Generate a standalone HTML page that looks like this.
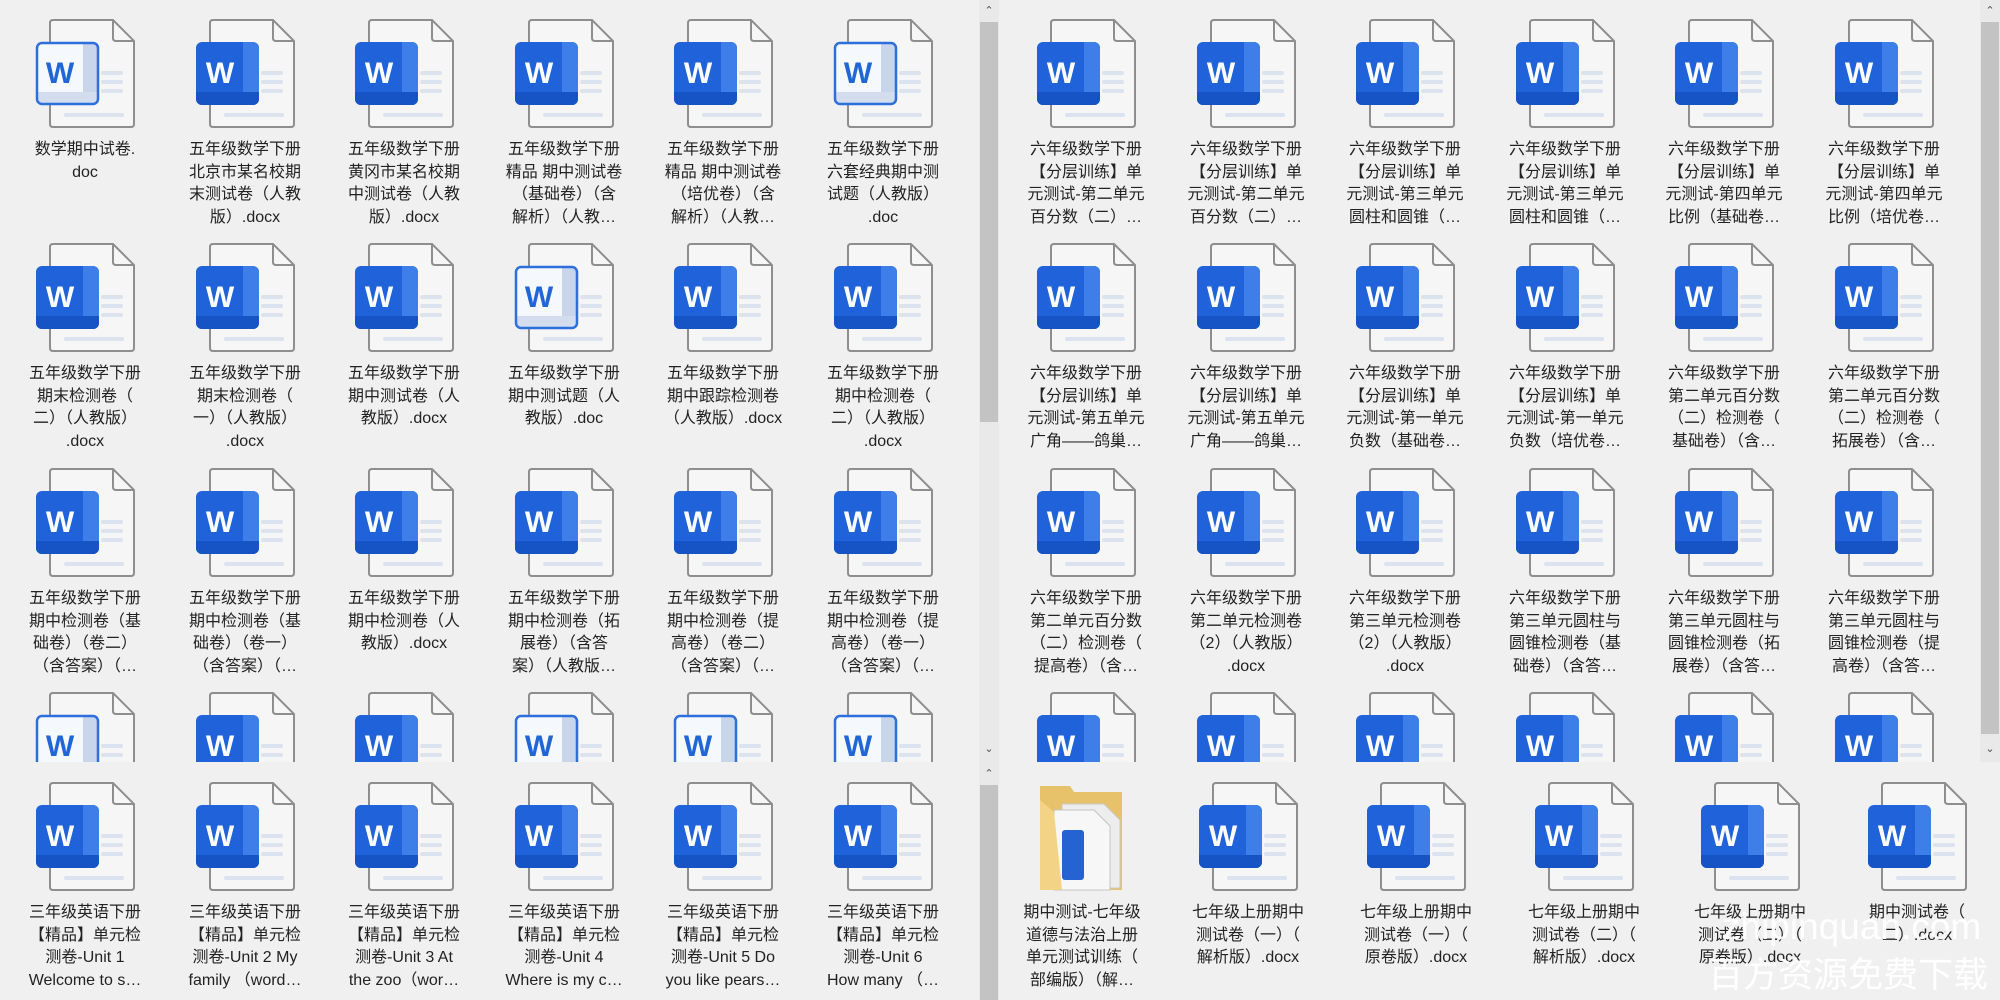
<!DOCTYPE html>
<html><head><meta charset="utf-8">
<style>
html{margin:0;padding:0;width:2000px;height:1000px;overflow:hidden;}
body{margin:0;padding:0;width:2000px;height:1000px;background:#f0f0f0;position:relative;overflow:hidden;font-family:"Liberation Sans","Noto Sans CJK SC",sans-serif;}
.pane{position:absolute;overflow:hidden;}
.c{position:absolute;width:200px;}
.c svg{display:block;margin-left:50px;width:100px;height:110px;}
.c p{margin:10px 0 0 0;text-align:center;font-size:16px;line-height:22.6px;color:#222;white-space:nowrap;}
.sb{position:absolute;background:#e9e9e9;width:20px;}
.th{position:absolute;left:1px;width:18px;background:#c3c3c3;}
.ar{position:absolute;left:0;width:20px;text-align:center;font-size:11px;color:#555;line-height:14px;}
.wm1{position:absolute;left:1722px;top:906px;font-size:37px;line-height:42px;color:rgba(255,255,255,0.95);font-family:"Liberation Sans",sans-serif;white-space:nowrap;}
.wm2{position:absolute;left:1708px;top:950px;font-size:35px;line-height:46px;color:rgba(255,255,255,0.97);font-family:"Noto Sans CJK SC",sans-serif;white-space:nowrap;}
</style></head><body>
<svg width="0" height="0" style="position:absolute">
<defs>
<clipPath id="tc"><rect x="1" y="23" width="63" height="63" rx="6"/></clipPath>
<g id="pg">
<path d="M18,1 H78 L99,22 V105 Q99,108 96,108 H18 Q15,108 15,105 V4 Q15,1 18,1 Z" fill="#f6f6f6" stroke="#8e8e8e" stroke-width="2"/>
<path d="M78,1 V19 Q78,22 81,22 H99" fill="none" stroke="#8e8e8e" stroke-width="2"/>
<rect x="66" y="52" width="22" height="4" rx="2" fill="#dbe3ef"/>
<rect x="66" y="61" width="22" height="4" rx="2" fill="#dbe3ef"/>
<rect x="66" y="70" width="22" height="4" rx="2" fill="#dbe3ef"/>
<rect x="29" y="94" width="60" height="4" rx="2" fill="#dbe3ef"/>
</g>
<symbol id="d" viewBox="0 0 100 110">
<use href="#pg"/>
<g clip-path="url(#tc)">
<rect x="0" y="22" width="66" height="66" fill="#1f62da"/>
<rect x="48" y="22" width="18" height="66" fill="#3d7ee8"/>
<rect x="0" y="73" width="66" height="15" fill="#1653c4"/>
</g>
<text x="25" y="64" text-anchor="middle" font-family="Liberation Sans,sans-serif" font-weight="bold" font-size="30" fill="#fff">W</text>
</symbol>
<symbol id="l" viewBox="0 0 100 110">
<use href="#pg"/>
<g clip-path="url(#tc)">
<rect x="0" y="22" width="66" height="66" fill="#f5f8fd"/>
<rect x="48" y="22" width="18" height="66" fill="#c8d5ea"/>
<rect x="0" y="73" width="66" height="15" fill="#d3ddee"/>
</g>
<rect x="2" y="24" width="61" height="61" rx="5" fill="none" stroke="#2d6fdc" stroke-width="2.5"/>
<text x="25" y="64" text-anchor="middle" font-family="Liberation Sans,sans-serif" font-weight="bold" font-size="30" fill="#2166d6">W</text>
</symbol>
<symbol id="f" viewBox="0 0 100 110">
<path d="M8,4 L38,4 L42,10 L90,10 L90,108 L8,108 Z" fill="#e8c26a"/>
<path d="M30,22 L72,22 L88,38 L88,106 L30,106 Z" fill="#ededed" stroke="#c9c9c9"/>
<path d="M22,28 L62,28 L78,44 L78,108 L22,108 Z" fill="#f7f7f7" stroke="#c4c4c4"/>
<rect x="30" y="48" width="22" height="50" rx="3" fill="#2563d3"/>
<path d="M8,18 L22,30 L30,108 L8,108 Z" fill="#f3d486"/>
</symbol>
</defs></svg>

<!-- LEFT TOP -->
<div class="pane" style="left:0;top:0;width:979px;height:762px;">
<div class="c" style="left:-15px;top:19px"><svg><use href="#l"/></svg><p>数学期中试卷.<br>doc</p></div>
<div class="c" style="left:145px;top:19px"><svg><use href="#d"/></svg><p>五年级数学下册<br>北京市某名校期<br>末测试卷（人教<br>版）.docx</p></div>
<div class="c" style="left:304px;top:19px"><svg><use href="#d"/></svg><p>五年级数学下册<br>黄冈市某名校期<br>中测试卷（人教<br>版）.docx</p></div>
<div class="c" style="left:464px;top:19px"><svg><use href="#d"/></svg><p>五年级数学下册<br>精品 期中测试卷<br>（基础卷）（含<br>解析）（人教…</p></div>
<div class="c" style="left:623px;top:19px"><svg><use href="#d"/></svg><p>五年级数学下册<br>精品 期中测试卷<br>（培优卷）（含<br>解析）（人教…</p></div>
<div class="c" style="left:783px;top:19px"><svg><use href="#l"/></svg><p>五年级数学下册<br>六套经典期中测<br>试题（人教版）<br>.doc</p></div>

<div class="c" style="left:-15px;top:243px"><svg><use href="#d"/></svg><p>五年级数学下册<br>期末检测卷（<br>二）（人教版）<br>.docx</p></div>
<div class="c" style="left:145px;top:243px"><svg><use href="#d"/></svg><p>五年级数学下册<br>期末检测卷（<br>一）（人教版）<br>.docx</p></div>
<div class="c" style="left:304px;top:243px"><svg><use href="#d"/></svg><p>五年级数学下册<br>期中测试卷（人<br>教版）.docx</p></div>
<div class="c" style="left:464px;top:243px"><svg><use href="#l"/></svg><p>五年级数学下册<br>期中测试题（人<br>教版）.doc</p></div>
<div class="c" style="left:623px;top:243px"><svg><use href="#d"/></svg><p>五年级数学下册<br>期中跟踪检测卷<br>（人教版）.docx</p></div>
<div class="c" style="left:783px;top:243px"><svg><use href="#d"/></svg><p>五年级数学下册<br>期中检测卷（<br>二）（人教版）<br>.docx</p></div>

<div class="c" style="left:-15px;top:468px"><svg><use href="#d"/></svg><p>五年级数学下册<br>期中检测卷（基<br>础卷）（卷二）<br>（含答案）（…</p></div>
<div class="c" style="left:145px;top:468px"><svg><use href="#d"/></svg><p>五年级数学下册<br>期中检测卷（基<br>础卷）（卷一）<br>（含答案）（…</p></div>
<div class="c" style="left:304px;top:468px"><svg><use href="#d"/></svg><p>五年级数学下册<br>期中检测卷（人<br>教版）.docx</p></div>
<div class="c" style="left:464px;top:468px"><svg><use href="#d"/></svg><p>五年级数学下册<br>期中检测卷（拓<br>展卷）（含答<br>案）（人教版…</p></div>
<div class="c" style="left:623px;top:468px"><svg><use href="#d"/></svg><p>五年级数学下册<br>期中检测卷（提<br>高卷）（卷二）<br>（含答案）（…</p></div>
<div class="c" style="left:783px;top:468px"><svg><use href="#d"/></svg><p>五年级数学下册<br>期中检测卷（提<br>高卷）（卷一）<br>（含答案）（…</p></div>

<div class="c" style="left:-15px;top:692px"><svg><use href="#l"/></svg></div>
<div class="c" style="left:145px;top:692px"><svg><use href="#d"/></svg></div>
<div class="c" style="left:304px;top:692px"><svg><use href="#d"/></svg></div>
<div class="c" style="left:464px;top:692px"><svg><use href="#l"/></svg></div>
<div class="c" style="left:623px;top:692px"><svg><use href="#l"/></svg></div>
<div class="c" style="left:783px;top:692px"><svg><use href="#l"/></svg></div>
</div>

<!-- RIGHT TOP -->
<div class="pane" style="left:1001px;top:0;width:978px;height:762px;">
<div class="c" style="left:-15px;top:19px"><svg><use href="#d"/></svg><p>六年级数学下册<br>【分层训练】单<br>元测试-第二单元<br>百分数（二）…</p></div>
<div class="c" style="left:145px;top:19px"><svg><use href="#d"/></svg><p>六年级数学下册<br>【分层训练】单<br>元测试-第二单元<br>百分数（二）…</p></div>
<div class="c" style="left:304px;top:19px"><svg><use href="#d"/></svg><p>六年级数学下册<br>【分层训练】单<br>元测试-第三单元<br>圆柱和圆锥（…</p></div>
<div class="c" style="left:464px;top:19px"><svg><use href="#d"/></svg><p>六年级数学下册<br>【分层训练】单<br>元测试-第三单元<br>圆柱和圆锥（…</p></div>
<div class="c" style="left:623px;top:19px"><svg><use href="#d"/></svg><p>六年级数学下册<br>【分层训练】单<br>元测试-第四单元<br>比例（基础卷…</p></div>
<div class="c" style="left:783px;top:19px"><svg><use href="#d"/></svg><p>六年级数学下册<br>【分层训练】单<br>元测试-第四单元<br>比例（培优卷…</p></div>

<div class="c" style="left:-15px;top:243px"><svg><use href="#d"/></svg><p>六年级数学下册<br>【分层训练】单<br>元测试-第五单元<br>广角——鸽巢…</p></div>
<div class="c" style="left:145px;top:243px"><svg><use href="#d"/></svg><p>六年级数学下册<br>【分层训练】单<br>元测试-第五单元<br>广角——鸽巢…</p></div>
<div class="c" style="left:304px;top:243px"><svg><use href="#d"/></svg><p>六年级数学下册<br>【分层训练】单<br>元测试-第一单元<br>负数（基础卷…</p></div>
<div class="c" style="left:464px;top:243px"><svg><use href="#d"/></svg><p>六年级数学下册<br>【分层训练】单<br>元测试-第一单元<br>负数（培优卷…</p></div>
<div class="c" style="left:623px;top:243px"><svg><use href="#d"/></svg><p>六年级数学下册<br>第二单元百分数<br>（二）检测卷（<br>基础卷）（含…</p></div>
<div class="c" style="left:783px;top:243px"><svg><use href="#d"/></svg><p>六年级数学下册<br>第二单元百分数<br>（二）检测卷（<br>拓展卷）（含…</p></div>

<div class="c" style="left:-15px;top:468px"><svg><use href="#d"/></svg><p>六年级数学下册<br>第二单元百分数<br>（二）检测卷（<br>提高卷）（含…</p></div>
<div class="c" style="left:145px;top:468px"><svg><use href="#d"/></svg><p>六年级数学下册<br>第二单元检测卷<br>（2）（人教版）<br>.docx</p></div>
<div class="c" style="left:304px;top:468px"><svg><use href="#d"/></svg><p>六年级数学下册<br>第三单元检测卷<br>（2）（人教版）<br>.docx</p></div>
<div class="c" style="left:464px;top:468px"><svg><use href="#d"/></svg><p>六年级数学下册<br>第三单元圆柱与<br>圆锥检测卷（基<br>础卷）（含答…</p></div>
<div class="c" style="left:623px;top:468px"><svg><use href="#d"/></svg><p>六年级数学下册<br>第三单元圆柱与<br>圆锥检测卷（拓<br>展卷）（含答…</p></div>
<div class="c" style="left:783px;top:468px"><svg><use href="#d"/></svg><p>六年级数学下册<br>第三单元圆柱与<br>圆锥检测卷（提<br>高卷）（含答…</p></div>

<div class="c" style="left:-15px;top:692px"><svg><use href="#d"/></svg></div>
<div class="c" style="left:145px;top:692px"><svg><use href="#d"/></svg></div>
<div class="c" style="left:304px;top:692px"><svg><use href="#d"/></svg></div>
<div class="c" style="left:464px;top:692px"><svg><use href="#d"/></svg></div>
<div class="c" style="left:623px;top:692px"><svg><use href="#d"/></svg></div>
<div class="c" style="left:783px;top:692px"><svg><use href="#d"/></svg></div>
</div>

<!-- LEFT BOTTOM -->
<div class="pane" style="left:0;top:765px;width:979px;height:235px;">
<div class="c" style="left:-15px;top:17px"><svg><use href="#d"/></svg><p>三年级英语下册<br>【精品】单元检<br>测卷-Unit 1<br>Welcome to s…</p></div>
<div class="c" style="left:145px;top:17px"><svg><use href="#d"/></svg><p>三年级英语下册<br>【精品】单元检<br>测卷-Unit 2 My<br>family （word…</p></div>
<div class="c" style="left:304px;top:17px"><svg><use href="#d"/></svg><p>三年级英语下册<br>【精品】单元检<br>测卷-Unit 3 At<br>the zoo（wor…</p></div>
<div class="c" style="left:464px;top:17px"><svg><use href="#d"/></svg><p>三年级英语下册<br>【精品】单元检<br>测卷-Unit 4<br>Where is my c…</p></div>
<div class="c" style="left:623px;top:17px"><svg><use href="#d"/></svg><p>三年级英语下册<br>【精品】单元检<br>测卷-Unit 5 Do<br>you like pears…</p></div>
<div class="c" style="left:783px;top:17px"><svg><use href="#d"/></svg><p>三年级英语下册<br>【精品】单元检<br>测卷-Unit 6<br>How many （…</p></div>
</div>

<!-- RIGHT BOTTOM -->
<div class="pane" style="left:1001px;top:765px;width:999px;height:235px;">
<div class="c" style="left:-19px;top:17px"><svg><use href="#f"/></svg><p>期中测试-七年级<br>道德与法治上册<br>单元测试训练（<br>部编版）（解…</p></div>
<div class="c" style="left:147px;top:17px"><svg><use href="#d"/></svg><p>七年级上册期中<br>测试卷（一）（<br>解析版）.docx</p></div>
<div class="c" style="left:315px;top:17px"><svg><use href="#d"/></svg><p>七年级上册期中<br>测试卷（一）（<br>原卷版）.docx</p></div>
<div class="c" style="left:483px;top:17px"><svg><use href="#d"/></svg><p>七年级上册期中<br>测试卷（二）（<br>解析版）.docx</p></div>
<div class="c" style="left:649px;top:17px"><svg><use href="#d"/></svg><p>七年级上册期中<br>测试卷（二）（<br>原卷版）.docx</p></div>
<div class="c" style="left:816px;top:17px"><svg><use href="#d"/></svg><p>期中测试卷（<br>二）.docx</p></div>
</div>

<!-- scrollbars -->
<div class="sb" style="left:979px;top:0;height:762px;">
<div class="ar" style="top:4px">&#8963;</div>
<div class="th" style="top:22px;height:400px;"></div>
<div class="ar" style="top:742px">&#8964;</div>
</div>
<div class="sb" style="left:979px;top:762px;height:238px;">
<div class="ar" style="top:5px">&#8963;</div>
<div class="th" style="top:23px;height:215px;"></div>
</div>
<div class="sb" style="left:1980px;top:0;height:762px;">
<div class="ar" style="top:4px">&#8963;</div>
<div class="th" style="top:22px;height:712px;"></div>
<div class="ar" style="top:742px">&#8964;</div>
</div>

<div class="wm1">zhipinquan.com</div>
<div class="wm2">百方资源免费下载</div>
</body></html>
